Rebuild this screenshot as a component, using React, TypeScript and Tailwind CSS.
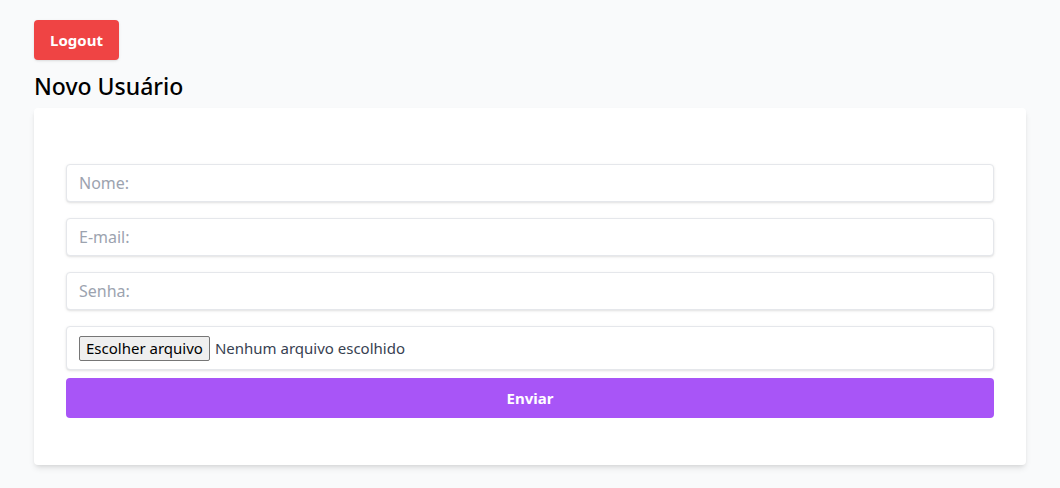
import { useState } from "react";

const fieldClass =
  "w-full h-[38px] rounded border border-[#e5e7eb] bg-white px-3 text-base text-gray-800 shadow-sm placeholder:text-[#9ca3af] focus:outline-none";

export default function App() {
  const [fileName, setFileName] = useState("");

  return (
    <div
      className="min-h-screen bg-[#f9fafb] px-[34px] pt-5 pb-6 text-gray-900"
      style={{ fontFamily: '"Noto Sans", "Open Sans", sans-serif' }}
    >
      <button
        type="button"
        className="h-10 w-[85px] rounded bg-[#ef4444] text-[15px] font-bold text-white shadow-sm"
      >
        Logout
      </button>
      <h1 className="mt-[11px] text-[23px] leading-[30px] font-medium text-black">
        Novo Usuário
      </h1>
      <div className="mt-[7px] rounded bg-white px-8 pt-14 pb-[47px] shadow-md">
        <form
          className="flex flex-col"
          onSubmit={(event) => event.preventDefault()}
        >
          <div className="flex flex-col gap-4">
            <input type="text" placeholder="Nome:" className={fieldClass} />
            <input type="email" placeholder="E-mail:" className={fieldClass} />
            <input type="password" placeholder="Senha:" className={fieldClass} />
            <label className="flex h-11 w-full cursor-pointer items-center rounded border border-[#e5e7eb] bg-white px-3 shadow-sm">
              <span className="flex h-[25px] items-center rounded-[2px] border border-[#767676] bg-[#efefef] px-[6px] text-[15px] text-black">
                Escolher arquivo
              </span>
              <span className="ml-[5px] text-[15px] text-[#374151]">
                {fileName || "Nenhum arquivo escolhido"}
              </span>
              <input
                type="file"
                className="hidden"
                onChange={(event) => setFileName(event.target.files?.[0]?.name ?? "")}
              />
            </label>
          </div>
          <button
            type="submit"
            className="mt-2 h-10 w-full rounded bg-[#a855f7] text-[15px] font-bold text-white"
          >
            Enviar
          </button>
        </form>
      </div>
    </div>
  );
}
